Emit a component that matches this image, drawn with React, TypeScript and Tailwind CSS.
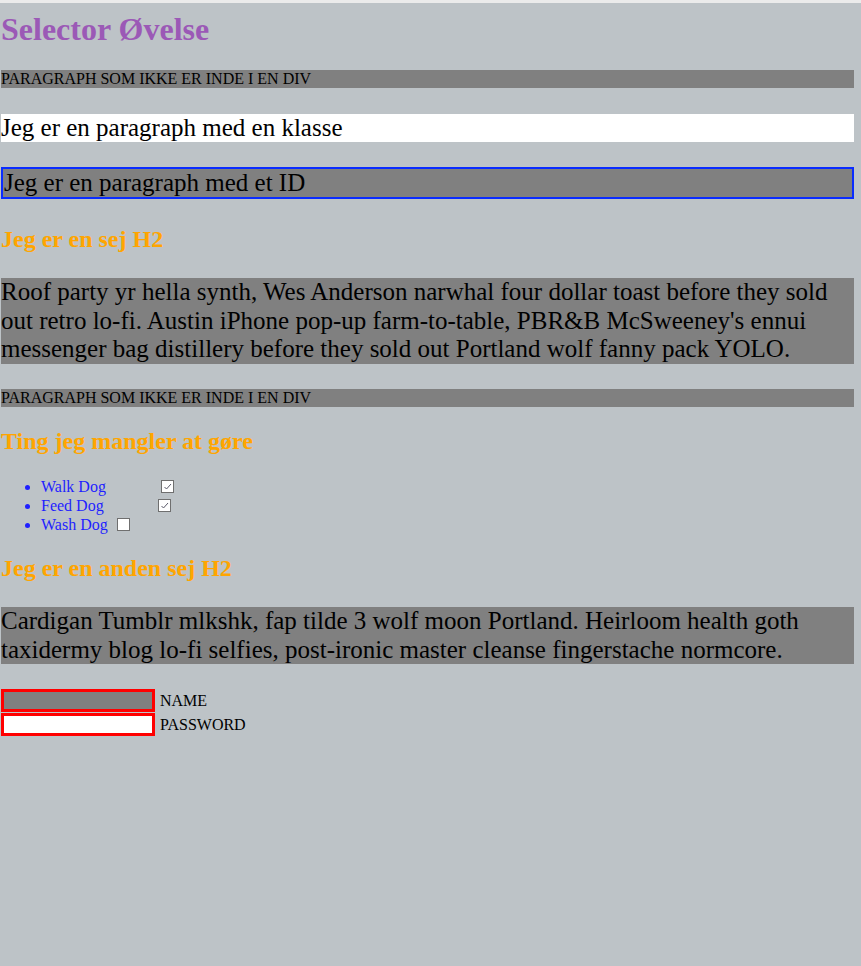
import React from "react";

const serif = { fontFamily: '"Liberation Serif", "Times New Roman", serif' };

function Check({ checked }: { checked: boolean }) {
  return (
    <span className="inline-block w-[13px] h-[13px] border border-[#6f6f6f] bg-white align-[-1px] relative">
      {checked && (
        <svg viewBox="0 0 11 11" className="absolute left-0 top-0 w-[11px] h-[11px]">
          <path d="M2.5 6 L4.5 8 L9 3" fill="none" stroke="#5a5a6a" strokeWidth="1" />
        </svg>
      )}
    </span>
  );
}

export default function App() {
  return (
    <div style={serif} className="w-[861px] min-h-[966px] bg-[#bdc3c7] text-black">
      <div className="h-[3px] bg-[#ebebeb]" />
      <div className="ml-[1px] w-[853px] flex flex-col">
        <h1 className="mt-[8px] text-[32px] leading-[37px] font-bold text-[#9b59b6]">Selector Øvelse</h1>
        <p className="mt-[22px] bg-[#808080] text-[16px] leading-[18px]">PARAGRAPH SOM IKKE ER INDE I EN DIV</p>
        <p className="mt-[26px] bg-white text-[25px] leading-[27.7px]">Jeg er en paragraph med en klasse</p>
        <p className="mt-[25.3px] bg-[#808080] border-2 border-[#0a2cff] text-[25px] leading-[28px] pl-[1px]">Jeg er en paragraph med et ID</p>
        <h2 className="mt-[26px] text-[24px] leading-[28px] font-bold text-[#ffa500]">Jeg er en sej H2</h2>
        <p className="mt-[25px] bg-[#808080] text-[25px] leading-[28.7px]">
          Roof party yr hella synth, Wes Anderson narwhal four dollar toast before they sold out retro lo-fi. Austin iPhone pop-up farm-to-table, PBR&amp;B McSweeney's ennui messenger bag distillery before they sold out Portland wolf fanny pack YOLO.
        </p>
        <p className="mt-[25px] bg-[#808080] text-[16px] leading-[18px]">PARAGRAPH SOM IKKE ER INDE I EN DIV</p>
        <h2 className="mt-[20px] text-[24px] leading-[28px] font-bold text-[#ffa500]">Ting jeg mangler at gøre</h2>
        <ul className="mt-[21.6px] list-disc pl-[40px] text-[16px] leading-[19.3px] text-[#1f1fff]">
          <li>
            <span className="inline-block w-[120px]">Walk Dog</span>
            <Check checked />
          </li>
          <li>
            <span className="inline-block w-[117px]">Feed Dog</span>
            <Check checked />
          </li>
          <li>
            <span className="inline-block w-[76px]">Wash Dog</span>
            <Check checked={false} />
          </li>
        </ul>
        <h2 className="mt-[19.4px] text-[24px] leading-[28px] font-bold text-[#ffa500]">Jeg er en anden sej H2</h2>
        <p className="mt-[25px] bg-[#808080] text-[25px] leading-[28.7px]">
          Cardigan Tumblr mlkshk, fap tilde 3 wolf moon Portland. Heirloom health goth taxidermy blog lo-fi selfies, post-ironic master cleanse fingerstache normcore.
        </p>
        <div className="mt-[25px] flex flex-col gap-[1px]">
          <div className="flex items-center">
            <div className="w-[154px] h-[23px] border-[3px] border-[#ff0000] bg-[#808080]" />
            <span className="ml-[5px] text-[16px] leading-[18px]">NAME</span>
          </div>
          <div className="flex items-center">
            <div className="w-[154px] h-[23px] border-[3px] border-[#ff0000] bg-white" />
            <span className="ml-[5px] text-[16px] leading-[18px]">PASSWORD</span>
          </div>
        </div>
      </div>
    </div>
  );
}
